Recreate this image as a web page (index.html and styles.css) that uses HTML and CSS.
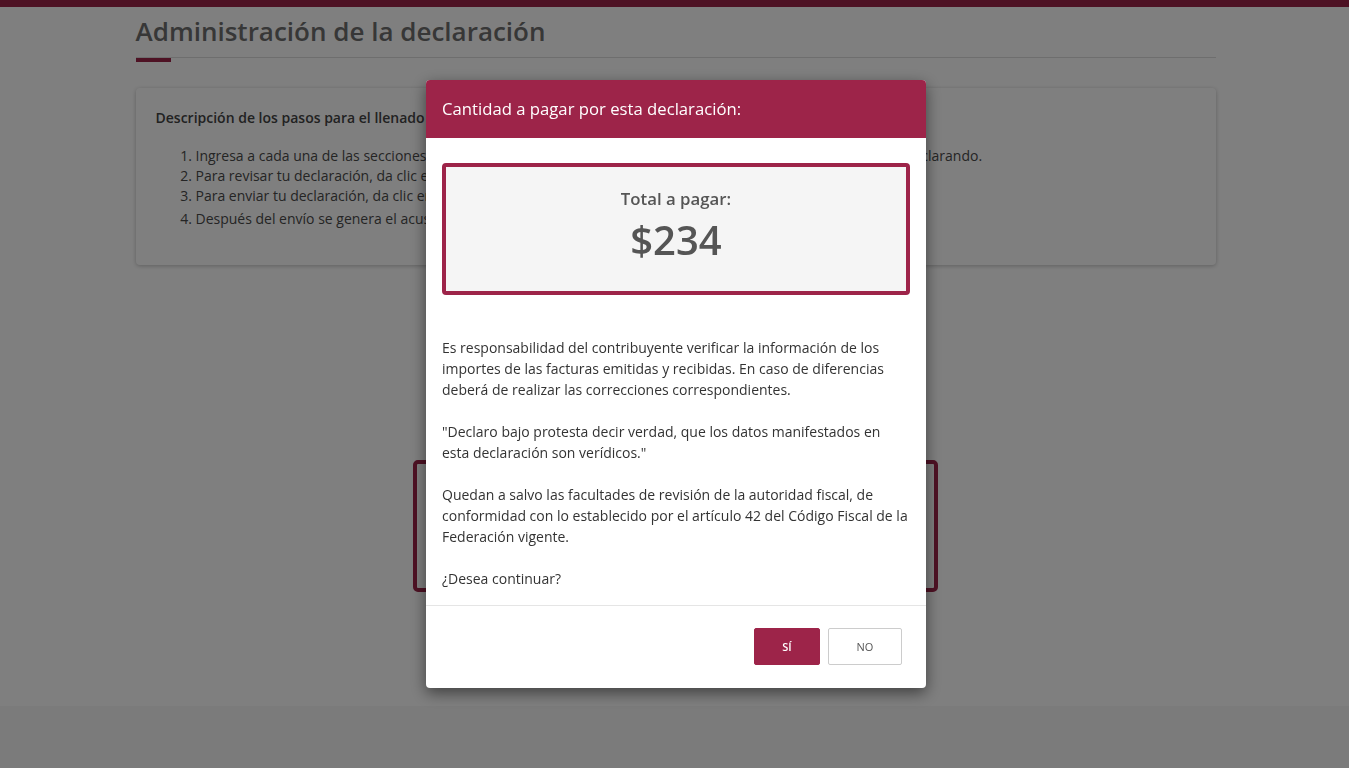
FILE: index.html
```html
<!DOCTYPE html>
<html lang="es">
<head>
<meta charset="utf-8">
<title>Administración de la declaración</title>
<link rel="stylesheet" href="styles.css">
</head>
<body>
<div class="topbar"></div>
<main class="container">
  <h1 class="title">Administración de la declaración</h1>
  <div class="title-rule"><span class="accent"></span></div>
  <section class="card">
    <p class="card-head">Descripción de los pasos para el llenado</p>
    <ol class="steps">
      <li>Ingresa a cada una de las secciones y captura la información que corresponde al periodo y ejercicio que está declarando.</li>
      <li>Para revisar tu declaración, da clic en el botón Vista previa.</li>
      <li>Para enviar tu declaración, da clic en el botón Enviar.</li>
      <li>Después del envío se genera el acuse de recibo.</li>
    </ol>
  </section>
  <div class="total-box"></div>
</main>
<footer class="footer"></footer>

<div class="overlay"></div>
<div class="modal" role="dialog">
  <div class="modal-header">Cantidad a pagar por esta declaración:</div>
  <div class="modal-body">
    <div class="amount-box">
      <div class="amount-label">Total a pagar:</div>
      <div class="amount">$234</div>
    </div>
    <p class="legal">Es responsabilidad del contribuyente verificar la información de los importes de las facturas emitidas y recibidas. En caso de diferencias deberá de realizar las correcciones correspondientes.<br><br>"Declaro bajo protesta decir verdad, que los datos manifestados en esta declaración son verídicos."<br><br>Quedan a salvo las facultades de revisión de la autoridad fiscal, de conformidad con lo establecido por el artículo 42 del Código Fiscal de la Federación vigente.<br><br>¿Desea continuar?</p>
  </div>
  <div class="modal-footer">
    <button class="btn btn-yes">SÍ</button>
    <button class="btn btn-no">NO</button>
  </div>
</div>
</body>
</html>
```

FILE: styles.css
```css
html, body {
  margin: 0;
  padding: 0;
}
body {
  font-family: "Open Sans", "Noto Sans", sans-serif;
  background: #ffffff;
  color: #333;
  min-height: 768px;
  display: flex;
  flex-direction: column;
}
.topbar {
  height: 7px;
  background: #9d2449;
}
.container {
  width: 1080px;
  margin: 0 auto;
  padding-left: 2px;
}
.title {
  margin: 6px 0 0;
  font-size: 26px;
  font-weight: 600;
  line-height: 36px;
  color: #6e6e6e;
}
.title-rule {
  margin-top: 8px;
  border-top: 1px solid #dcdcdc;
  height: 0;
}
.accent {
  display: block;
  width: 35px;
  height: 4px;
  background: #9d2449;
}
.card {
  margin-top: 30px;
  height: 177px;
  box-sizing: border-box;
  background: #fff;
  border-radius: 4px;
  box-shadow: 0 1px 4px rgba(0,0,0,0.25);
  padding: 20px 20px;
}
.card-head {
  margin: 0;
  font-size: 14px;
  font-weight: 600;
  color: #444;
  line-height: 20px;
}
.steps {
  margin: 18px 0 0;
  padding-left: 40px;
  font-size: 14px;
  line-height: 20px;
  color: #4a4a4a;
}
.steps li:last-child {
  margin-top: 3px;
}
.total-box {
  margin: 195px auto 0;
  width: 525px;
  height: 132px;
  box-sizing: border-box;
  border: 4px solid #9d2449;
  border-radius: 5px;
  background: #fff;
}
.footer {
  margin-top: 114px;
  flex: 1;
  background: #f6f6f6;
}
.overlay {
  position: fixed;
  inset: 0;
  background: rgba(0,0,0,0.5);
}
.modal {
  position: fixed;
  top: 80px;
  left: 426px;
  width: 500px;
  background: #fff;
  border-radius: 4px;
  box-shadow: 0 5px 15px rgba(0,0,0,0.5);
  overflow: hidden;
}
.modal-header {
  height: 58px;
  line-height: 58px;
  padding: 0 16px;
  background: #9d2449;
  color: #fff;
  font-size: 16.7px;
}
.modal-body {
  padding: 25px 16px 0;
}
.amount-box {
  height: 132px;
  box-sizing: border-box;
  border: 4px solid #9d2449;
  border-radius: 4px;
  background: #f5f5f5;
  text-align: center;
  color: #555;
  padding-top: 20px;
}
.amount-label {
  font-size: 16.8px;
  font-weight: 600;
  line-height: 24px;
}
.amount {
  font-size: 40px;
  font-weight: 600;
  line-height: 50px;
  margin-top: 4px;
}
.legal {
  margin: 42px 0 0;
  padding-bottom: 16px;
  font-size: 14px;
  line-height: 21px;
  color: #333;
}
.modal-footer {
  border-top: 1px solid #e5e5e5;
  padding: 22px 24px 23px;
  display: flex;
  justify-content: flex-end;
  gap: 8px;
}
.btn {
  height: 37px;
  font-family: "Open Sans", "Noto Sans", sans-serif;
  font-size: 11px;
  border-radius: 2px;
  cursor: pointer;
}
.btn-yes {
  width: 66px;
  background: #9d2449;
  border: 1px solid #9d2449;
  color: #fff;
  font-weight: 600;
}
.btn-no {
  width: 74px;
  background: #fff;
  border: 1px solid #ccc;
  color: #555;
}
```
